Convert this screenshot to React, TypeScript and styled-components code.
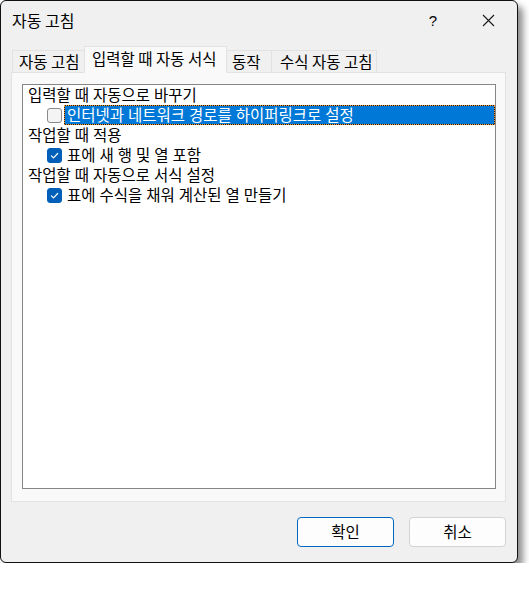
import React from "react";
import styled, { createGlobalStyle } from "styled-components";

const Global = createGlobalStyle`
  html, body { margin: 0; padding: 0; background: #ffffff; }
  body { font-family: "Noto Sans CJK KR", "Noto Sans", sans-serif; color: #000; }
  * { box-sizing: border-box; }
`;

const Window = styled.div`
  width: 518px;
  height: 563px;
  background: #f0f0f0;
  border: 1px solid #111;
  border-radius: 6px;
  box-shadow: 5px 6px 7px rgba(0, 0, 0, 0.45);
  display: flex;
  flex-direction: column;
  overflow: hidden;
  font-family: "Noto Sans CJK KR", "Noto Sans", sans-serif;
`;

const TitleBar = styled.div`
  height: 36px;
  display: flex;
  align-items: center;
  padding-left: 11px;
  flex-shrink: 0;
`;

const Title = styled.div`
  font-size: 16px;
  flex: 1;
  line-height: 1;
  padding-top: 1px;
`;

const TitleBtn = styled.div<{ $w: number }>`
  width: ${(p) => p.$w}px;
  height: 36px;
  display: flex;
  align-items: center;
  justify-content: center;
  font-size: 15px;
  font-family: "Liberation Sans", sans-serif;
  padding-top: 3px;
`;

const Body = styled.div`
  flex: 1;
  display: flex;
  flex-direction: column;
  padding: 10px 11px 14px 10px;
`;

const TabRow = styled.div`
  display: flex;
  align-items: flex-end;
  height: 26px;
  padding-left: 1px;
  margin-bottom: -1px;
  position: relative;
  z-index: 1;
`;

const Tab = styled.div<{ $w: number; $active?: boolean; $pl: number }>`
  width: ${(p) => p.$w}px;
  height: ${(p) => (p.$active ? 27 : 23)}px;
  padding-left: ${(p) => p.$pl}px;
  display: flex;
  align-items: center;
  font-size: 15.5px;
  line-height: 1;
  white-space: nowrap;
  background: ${(p) => (p.$active ? "#f9f9f9" : "#f0f0f0")};
  border: 1px solid #e2e2e2;
  border-bottom: ${(p) => (p.$active ? "1px solid #f9f9f9" : "1px solid #e2e2e2")};
  margin-left: -1px;
  position: relative;
  z-index: ${(p) => (p.$active ? 2 : 1)};
  padding-bottom: ${(p) => (p.$active ? 2 : 0)}px;
  &:first-child { margin-left: 0; }
`;

const Panel = styled.div`
  height: 430px;
  background: #f9f9f9;
  border: 1px solid #e2e2e2;
  padding: 11px 9px 12px 10px;
  display: flex;
`;

const ListBox = styled.div`
  flex: 1;
  background: #ffffff;
  border: 1px solid #868686;
  display: flex;
  flex-direction: column;
`;

const Row = styled.div<{ $indent?: boolean }>`
  height: 20px;
  display: flex;
  align-items: center;
  padding-left: ${(p) => (p.$indent ? 24 : 5)}px;
  font-size: 15.5px;
  line-height: 1;
  white-space: nowrap;
  word-spacing: 0.5px;
`;

const Box = styled.div<{ $checked?: boolean }>`
  width: 15px;
  height: 15px;
  border-radius: 3px;
  flex-shrink: 0;
  display: flex;
  align-items: center;
  justify-content: center;
  background: ${(p) => (p.$checked ? "#005fb8" : "#f4f4f4")};
  border: 1px solid ${(p) => (p.$checked ? "#005fb8" : "#8a8a8a")};
`;

const Label = styled.span<{ $selected?: boolean }>`
  margin-left: ${(p) => (p.$selected ? 2 : 5)}px;
  ${(p) =>
    p.$selected
      ? `
    flex: 1;
    align-self: stretch;
    display: flex;
    align-items: center;
    padding-left: 2px;
    color: #fff;
    border: 1px dotted #ff9a2e;
    background: linear-gradient(#0078d7, #0078d7) padding-box, #1a1a1a border-box;
  `
      : ""}
`;

const Footer = styled.div`
  display: flex;
  justify-content: flex-end;
  gap: 15px;
  margin-top: 15px;
`;

const Button = styled.button<{ $primary?: boolean }>`
  width: 97px;
  height: 30px;
  border-radius: 4px;
  font-family: "Noto Sans CJK KR", "Noto Sans", sans-serif;
  font-size: 15.5px;
  color: #000;
  background: #fdfdfd;
  border: 1px solid ${(p) => (p.$primary ? "#0067c0" : "#d3d3d3")};
  padding: 0 0 1px 0;
  line-height: 1;
`;

const Check = () => (
  <svg width="11" height="11" viewBox="0 0 11 11">
    <path d="M2.4 5.8 L4.5 7.9 L8.7 3.5" fill="none" stroke="#ffffff" strokeWidth="1.2" strokeLinecap="round" strokeLinejoin="round" />
  </svg>
);

const Close = () => (
  <svg width="13" height="13" viewBox="0 0 13 13">
    <path d="M1 1 L12 12 M12 1 L1 12" stroke="#1a1a1a" strokeWidth="1.1" />
  </svg>
);

export default function App() {
  return (
    <>
      <Global />
      <Window>
        <TitleBar>
          <Title>자동 고침</Title>
          <TitleBtn $w={52}>?</TitleBtn>
          <TitleBtn $w={58}>
            <Close />
          </TitleBtn>
        </TitleBar>
        <Body>
          <TabRow>
            <Tab $w={73} $pl={6}>자동 고침</Tab>
            <Tab $w={143} $active $pl={7}>입력할 때 자동 서식</Tab>
            <Tab $w={46} $pl={5}>동작</Tab>
            <Tab $w={106} $pl={8}>수식 자동 고침</Tab>
          </TabRow>
          <Panel>
            <ListBox>
              <Row>입력할 때 자동으로 바꾸기</Row>
              <Row $indent>
                <Box />
                <Label $selected>인터넷과 네트워크 경로를 하이퍼링크로 설정</Label>
              </Row>
              <Row>작업할 때 적용</Row>
              <Row $indent>
                <Box $checked>
                  <Check />
                </Box>
                <Label>표에 새 행 및 열 포함</Label>
              </Row>
              <Row>작업할 때 자동으로 서식 설정</Row>
              <Row $indent>
                <Box $checked>
                  <Check />
                </Box>
                <Label>표에 수식을 채워 계산된 열 만들기</Label>
              </Row>
            </ListBox>
          </Panel>
          <Footer>
            <Button $primary>확인</Button>
            <Button>취소</Button>
          </Footer>
        </Body>
      </Window>
    </>
  );
}
